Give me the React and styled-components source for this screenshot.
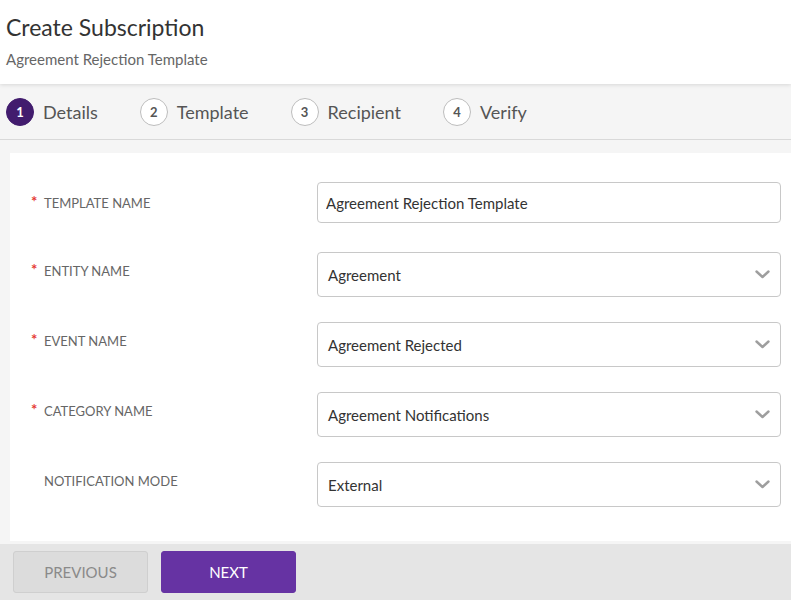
import React from 'react';
import styled, { createGlobalStyle } from 'styled-components';

const GlobalStyle = createGlobalStyle`
  html, body {
    margin: 0;
    padding: 0;
    background: #f5f5f5;
    font-family: Lato, "Open Sans", "Liberation Sans", sans-serif;
  }
  * { box-sizing: border-box; }
`;

const Page = styled.div`
  width: 791px;
  height: 600px;
  display: flex;
  flex-direction: column;
  overflow: hidden;
  background: #f5f5f5;
`;

const Header = styled.header`
  height: 84px;
  padding: 13px 6px 0;
  background: #fff;
  box-shadow: 0 1px 4px rgba(0, 0, 0, 0.12);
  position: relative;
  z-index: 1;
`;

const Title = styled.h1`
  margin: 0;
  font-size: 23px;
  line-height: 28px;
  font-weight: 400;
  color: #333;
`;

const Subtitle = styled.div`
  margin-top: 9px;
  font-size: 15px;
  line-height: 18px;
  color: #666;
`;

const Steps = styled.nav`
  height: 56px;
  display: flex;
  align-items: center;
  gap: 42px;
  padding: 0 6px;
  background: #f5f5f5;
  border-bottom: 1px solid #d9d9d9;
`;

const Step = styled.div`
  display: flex;
  align-items: center;
  gap: 9px;
`;

const StepNum = styled.span`
  width: 28px;
  height: 28px;
  border-radius: 50%;
  display: flex;
  align-items: center;
  justify-content: center;
  font-size: 13px;
  font-weight: 700;
  color: ${p => (p.$active ? '#fff' : '#555')};
  background: ${p => (p.$active ? '#421c6e' : '#fff')};
  border: 1px solid ${p => (p.$active ? '#421c6e' : '#bdbdbd')};
`;

const StepLabel = styled.span`
  font-size: 18px;
  color: #555;
`;

const Body = styled.main`
  flex: 1;
  padding: 13px 0 3px 10px;
  display: flex;
`;

const Card = styled.section`
  flex: 1;
  background: #fff;
  padding: 29px 10px 0 21px;
`;

const Row = styled.div`
  height: 70px;
  display: grid;
  grid-template-columns: 286px 1fr;
  align-items: start;
`;

const Label = styled.label`
  display: flex;
  align-items: flex-start;
  padding-top: ${p => (p.$short ? '11px' : '13px')};
  font-size: 13px;
  line-height: 16px;
  color: #666;
  text-transform: uppercase;
`;

const Star = styled.span`
  width: 13px;
  color: #e53935;
  font-size: 15px;
  font-weight: 700;
  line-height: 12px;
`;

const TextInput = styled.input`
  width: 100%;
  height: 41px;
  padding: 0 8px;
  border: 1px solid #c8c8c8;
  border-radius: 4px;
  font-family: inherit;
  font-size: 15px;
  color: #333;
  background: #fff;
  outline: none;
`;

const Select = styled.div`
  height: 45px;
  display: flex;
  align-items: center;
  justify-content: space-between;
  padding: 0 10px 0 10px;
  border: 1px solid #c8c8c8;
  border-radius: 4px;
  font-size: 15px;
  color: #333;
  background: #fff;
`;

const Footer = styled.footer`
  height: 56px;
  display: flex;
  align-items: center;
  gap: 13px;
  padding: 0 13px;
  background: #e5e5e5;
`;

const Button = styled.button`
  width: 135px;
  height: 42px;
  border-radius: 3px;
  font-family: inherit;
  font-size: 15px;
  text-transform: uppercase;
  cursor: pointer;
  border: 1px solid ${p => (p.$primary ? '#6633a3' : '#cfcfcf')};
  background: ${p => (p.$primary ? '#6633a3' : '#dcdcdc')};
  color: ${p => (p.$primary ? '#fff' : '#8a8a8a')};
`;

const Chevron = () => (
  <svg width="15" height="9" viewBox="0 0 15 9" fill="none">
    <polyline points="1.5,1.5 7.5,7 13.5,1.5" stroke="#9e9e9e" strokeWidth="2.4" strokeLinecap="round" strokeLinejoin="round" />
  </svg>
);

const steps = ['Details', 'Template', 'Recipient', 'Verify'];

const selects = [
  { label: 'Entity Name', value: 'Agreement', required: true },
  { label: 'Event Name', value: 'Agreement Rejected', required: true },
  { label: 'Category Name', value: 'Agreement Notifications', required: true },
  { label: 'Notification Mode', value: 'External', required: false },
];

export default function App() {
  return (
    <Page>
      <GlobalStyle />
      <Header>
        <Title>Create Subscription</Title>
        <Subtitle>Agreement Rejection Template</Subtitle>
      </Header>
      <Steps>
        {steps.map((s, i) => (
          <Step key={s}>
            <StepNum $active={i === 0}>{i + 1}</StepNum>
            <StepLabel>{s}</StepLabel>
          </Step>
        ))}
      </Steps>
      <Body>
        <Card>
          <Row>
            <Label><Star>*</Star>Template Name</Label>
            <TextInput defaultValue="Agreement Rejection Template" />
          </Row>
          {selects.map(f => (
            <Row key={f.label}>
              <Label $short><Star>{f.required ? '*' : ''}</Star>{f.label}</Label>
              <Select>
                <span>{f.value}</span>
                <Chevron />
              </Select>
            </Row>
          ))}
        </Card>
      </Body>
      <Footer>
        <Button>Previous</Button>
        <Button $primary>Next</Button>
      </Footer>
    </Page>
  );
}
